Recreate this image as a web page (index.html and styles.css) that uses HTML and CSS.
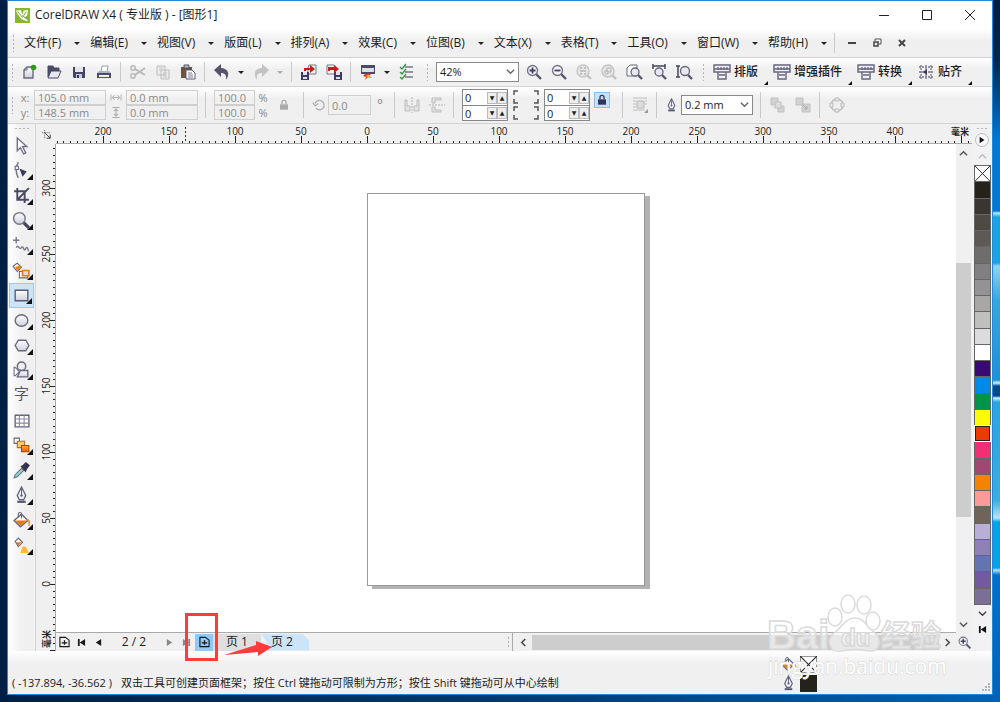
FILE: index.html
```html
<!DOCTYPE html>
<html lang="zh-CN">
<head>
<meta charset="utf-8">
<title>CorelDRAW X4</title>
<link rel="stylesheet" href="styles.css">
</head>
<body>
<svg class="sprite" aria-hidden="true">
  <defs>
    <linearGradient id="g-shade" x1="0" y1="0" x2="0" y2="1"><stop offset="0" stop-color="#fff"/><stop offset="1" stop-color="#cfcfdc"/></linearGradient>
    <linearGradient id="g-orange" x1="0" y1="0" x2="0" y2="1"><stop offset="0" stop-color="#ffb03a"/><stop offset="1" stop-color="#f25a00"/></linearGradient>
  </defs>
  <symbol id="new" viewBox="0 0 18 18"><path d="M4 7l3-3h6v11H4z" fill="url(#g-shade)" stroke="#6b6a80" stroke-width="1.4"/><path d="M4 7h3V4" fill="none" stroke="#6b6a80"/><circle cx="13.500" cy="4.500" r="2.800" fill="#2f9a1c"/></symbol>
  <symbol id="open" viewBox="0 0 18 18"><path d="M3 14V3h5l1 2h5v3" fill="#4a4a66" stroke="#4a4a66"/><path d="M3 15l3-7h10l-3 7z" fill="#e6e8f2" stroke="#4a4a66"/></symbol>
  <symbol id="save" viewBox="0 0 18 18"><path d="M3 4h12v11H4l-1-1z" fill="#44446a"/><path d="M5 4h8v5H5z" fill="#e4e4ef"/><path d="M6 11h6v4H6z" fill="#c9c9da"/><path d="M7 12h2v3H7z" fill="#33335a"/></symbol>
  <symbol id="print" viewBox="0 0 18 18"><path d="M6 9l1-6h6l-1 6" fill="#fff" stroke="#8fa6a0"/><path d="M2 10l2-2h10l2 2z" fill="#aeb0bd"/><path d="M2 10h14v5H2z" fill="#4b4b68"/><path d="M4 12h10v2H4z" fill="#f0f3dd"/></symbol>
  <symbol id="cut" viewBox="0 0 18 18"><path d="M6 6l10 6M6 12l10-7" stroke="#b9b9b9" stroke-width="1.800"/><circle cx="4" cy="5" r="2.200" fill="none" stroke="#b9b9b9" stroke-width="1.500"/><circle cx="4" cy="13" r="2.200" fill="none" stroke="#b9b9b9" stroke-width="1.500"/></symbol>
  <symbol id="copy" viewBox="0 0 18 18"><path d="M3 3h8v9H3zM7 7h8v9H7z" fill="#ededed" stroke="#bdbdbd"/><path d="M5 5h4M5 7h2M9 10h4M9 12h4M9 14h4" stroke="#c4c4c4"/></symbol>
  <symbol id="paste" viewBox="0 0 18 18"><path d="M2 4h11v11H2z" fill="#6b553e"/><path d="M5 2h5v3H5z" fill="#b8b8bd" stroke="#55556c"/><path d="M7 7h6l3 3v6H7z" fill="#fff" stroke="#5b5b74"/><path d="M9 10h4M9 12h5M9 14h5" stroke="#7a7a91"/></symbol>
  <symbol id="undo" viewBox="0 0 18 18"><path d="M1 7l7-6v4c6 0 10 5 5 12 1-6-2-7-5-7v4z" fill="#55536b"/></symbol>
  <symbol id="redo" viewBox="0 0 18 18"><path d="M17 7l-7-6v4c-6 0-10 5-5 12-1-6 2-7 5-7v4z" fill="#c3c3c3"/></symbol>
  <symbol id="disk-page" viewBox="0 0 18 18"><path d="M9 2h7v9H8V5z" fill="#f4f4f8" stroke="#77768b"/><path d="M1 9h8v8H1z" fill="#3d3d63"/><path d="M3 9h4v3H3zM3 14h4v2H3z" fill="#e0e2ee"/></symbol>
  <symbol id="import" viewBox="0 0 18 18"><use href="#disk-page"/><path d="M4 8V5h6V2l5 4-5 4V7H6v1z" fill="#d01616"/></symbol>
  <symbol id="export" viewBox="0 0 18 18"><g transform="translate(18 0) scale(-1 1)"><use href="#disk-page"/></g><path d="M3 8V4h6V2l5 4-5 4V7H5v1z" fill="#d01616"/></symbol>
  <symbol id="launch" viewBox="0 0 18 18"><path d="M2 2h14v9H2z" fill="#4b4a66"/><path d="M3 5h12v4H3z" fill="#dddde6"/><path d="M6 11h6l-2 2 3 2-4-1-3 3 1-3-3-1z" fill="#e8371c"/><circle cx="9" cy="13" r="1.500" fill="#f8ae36"/></symbol>
  <symbol id="checks" viewBox="0 0 18 18"><path d="M7 4h8M7 9h8M7 14h8" stroke="#77778a" stroke-width="1.600"/><path d="M2 4l2 2 4-5M2 9l2 2 4-5M2 14l2 2 4-5" stroke="#359245" fill="none" stroke-width="1.300"/></symbol>
  <symbol id="lens" viewBox="0 0 18 18"><path d="M11 11l5 5" stroke="#55546f" stroke-width="2.400"/><circle cx="7.500" cy="7.500" r="5" fill="#f4f5fb" stroke="#727187" stroke-width="1.300"/></symbol>
  <symbol id="zoom-in" viewBox="0 0 18 18"><use href="#lens"/><path d="M4.500 7.500h6M7.500 4.500v6" stroke="#414069" stroke-width="1.800"/></symbol>
  <symbol id="zoom-out" viewBox="0 0 18 18"><use href="#lens"/><path d="M4.500 7.500h6" stroke="#414069" stroke-width="1.800"/></symbol>
  <symbol id="lens-off" viewBox="0 0 18 18"><path d="M12 12l4 4" stroke="#c2c2c2" stroke-width="2.400"/><circle cx="8" cy="8" r="6" fill="#e6e6e6" stroke="#c5c5c5" stroke-width="1.400"/></symbol>
  <symbol id="zoom-sel" viewBox="0 0 18 18"><use href="#lens-off"/><path d="M5 5h2M9 5h2M5 8h6M5 11h2M9 11h2" stroke="#b5b5b5" stroke-width="1.500"/></symbol>
  <symbol id="zoom-obj" viewBox="0 0 18 18"><use href="#lens-off"/><path d="M7 5h4v4H7zM5 8h3v3H5z" fill="none" stroke="#b5b5b5"/></symbol>
  <symbol id="zoom-page" viewBox="0 0 18 18"><path d="M2 5l3-3h7v11H2z" fill="#fff" stroke="#65647c"/><circle cx="10" cy="9" r="4" fill="#e8e8f2" stroke="#65647c" stroke-width="1.300"/><path d="M13 12l4 4" stroke="#55546f" stroke-width="2.400"/></symbol>
  <symbol id="zoom-width" viewBox="0 0 18 18"><path d="M3 1v5M15 1v5M3 3h12" stroke="#45445f" stroke-width="1.500"/><circle cx="9" cy="9" r="4" fill="#e8e8f2" stroke="#65647c" stroke-width="1.300"/><path d="M12 12l4 4" stroke="#55546f" stroke-width="2.400"/></symbol>
  <symbol id="zoom-height" viewBox="0 0 18 18"><path d="M1 3h4M1 14h4M3 3v11" stroke="#45445f" stroke-width="1.500"/><circle cx="10" cy="8" r="4.500" fill="#e8e8f2" stroke="#65647c" stroke-width="1.300"/><path d="M13 12l4 4" stroke="#55546f" stroke-width="2.400"/></symbol>
  <symbol id="plugin" viewBox="0 0 18 18"><path d="M1 2h16v7H1zM5 9h8v7H5z" fill="#f0f0f6" stroke="#65647f" stroke-width="1.400"/><path d="M1 6h16M5 4v3M8 4v3M11 4v3M14 4v3M6 12h6" stroke="#65647f" stroke-width="1.300"/></symbol>
  <symbol id="snap" viewBox="0 0 18 18"><path d="M2 4h14M2 9h14M2 14h14M4 2v14M9 2v14M14 2v14" stroke="#77768d" stroke-width="1.300" stroke-dasharray="2 1"/><path d="M6 9l4-3v6z" fill="#393855"/></symbol>
  <symbol id="span-h" viewBox="0 0 18 18"><path d="M2 5v8M16 5v8M4 9h10M7 6L4 9l3 3M11 6l3 3-3 3" fill="none" stroke="#b4b4b4" stroke-width="1.400"/></symbol>
  <symbol id="span-v" viewBox="0 0 18 18"><path d="M4 2h10M4 16h10M9 4v10M6 7l3-3 3 3M6 11l3 3 3-3" fill="none" stroke="#aaa" stroke-width="1.400"/></symbol>
  <symbol id="lock" viewBox="0 0 18 18"><path d="M6 8V5c0-4 6-4 6 0v3" fill="none" stroke="currentColor" stroke-width="2"/><path d="M3 8h12v8H3z" fill="currentColor"/></symbol>
  <symbol id="rotate" viewBox="0 0 18 18"><path d="M5 13a6 6 0 1 0-1-6M1 6l3 4 4-3" fill="none" stroke="#b0b0b0" stroke-width="1.600"/></symbol>
  <symbol id="mirror-h" viewBox="0 0 18 18"><path d="M2 4h2v6h3v5H2zM16 4h-2v6h-3v5h5z" fill="#e3e3e3" stroke="#bdbdbd"/><path d="M9 1v16" stroke="#b0b0b0" stroke-dasharray="2 1"/></symbol>
  <symbol id="mirror-v" viewBox="0 0 18 18"><path d="M4 2h9v2H7v3H4zM4 16h9v-2H7v-3H4z" fill="#e3e3e3" stroke="#bdbdbd"/><path d="M1 9h16" stroke="#b0b0b0" stroke-dasharray="2 1"/></symbol>
  <symbol id="wrap" viewBox="0 0 18 18"><path d="M2 2h14M2 5h3M2 8h3M2 11h3M14 5h2M14 8h2M2 14h12" stroke="#bdbdbd"/><path d="M6 5h7v7H6z" fill="#dcdcdc" stroke="#b8b8b8"/><path d="M17 13v4h-4z" fill="#999"/></symbol>
  <symbol id="nib" viewBox="0 0 18 18"><path d="M9 1l4 8-2 4H7L5 9z" fill="#f4f4fa" stroke="#65647e" stroke-width="1.300"/><path d="M9 2v7" stroke="#65647e"/><circle cx="9" cy="9" r="1.200" fill="#65647e"/><path d="M5 14h8v2H5z" fill="#55546e"/></symbol>
  <symbol id="order-a" viewBox="0 0 18 18"><path d="M2 2h7v7H2zM9 10h6v6H9z" fill="#d2d2d2" stroke="#c0c0c0"/><path d="M6 6h6v6H6z" fill="#ddd" stroke="#c0c0c0"/></symbol>
  <symbol id="order-b" viewBox="0 0 18 18"><path d="M2 2h7v7H2zM8 8h8v8H8z" fill="#d2d2d2" stroke="#c0c0c0"/><path d="M9 9l4 4M13 10v3h-3" stroke="#aaa" fill="none"/></symbol>
  <symbol id="convert" viewBox="0 0 18 18"><circle cx="9" cy="9" r="6" fill="none" stroke="#bdbdbd" stroke-width="1.400"/><path d="M7 2h4v3H7zM7 13h4v3H7zM2 7h3v4H2zM13 7h3v4h-3z" fill="#e8e8e8" stroke="#bdbdbd"/></symbol>
  <symbol id="pick" viewBox="0 0 18 18"><path d="M5 2v12l3-3 3 6 2-1-3-6h4z" fill="#fff" stroke="#716f88" stroke-width="1.300"/></symbol>
  <symbol id="shape" viewBox="0 0 18 18"><path d="M6 1c-3 5-3 9 0 15" fill="none" stroke="#777689" stroke-width="1.400"/><path d="M3 5h3v3H3z" fill="#fff" stroke="#65647e"/><path d="M7 7l7 3-4 5z" fill="#3c3b59"/></symbol>
  <symbol id="crop" viewBox="0 0 18 18"><path d="M5 2v11h11M2 5h10v11M5 13L16 2" fill="none" stroke="#4a4964" stroke-width="1.800"/></symbol>
  <symbol id="zoom" viewBox="0 0 18 18"><path d="M11 11l5 5" stroke="#44435e" stroke-width="3"/><circle cx="7" cy="7" r="5.500" fill="url(#g-shade)" stroke="#727187" stroke-width="1.300"/></symbol>
  <symbol id="freehand" viewBox="0 0 18 18"><path d="M1 4h6M4 1v6M4 11c2-4 3 3 5 0s2 5 4 1 2 3 3 2" fill="none" stroke="#777689" stroke-width="1.300"/></symbol>
  <symbol id="smart" viewBox="0 0 18 18"><path d="M1 5l4-3 4 4-4 4z" fill="#f4f4f8" stroke="#65647e"/><path d="M3 6l5-2v3l-3 3z" fill="#ef850d"/><path d="M7 10h8v6H7z" fill="#fff" stroke="#65647e"/><path d="M10 9h6v5h-6z" fill="#dcdce8" stroke="#e67912" stroke-width="1.500"/></symbol>
  <symbol id="rect" viewBox="0 0 18 18"><path d="M3 4h12v10H3z" fill="url(#g-shade)" stroke="#5b5a72" stroke-width="1.300"/></symbol>
  <symbol id="ellipse" viewBox="0 0 18 18"><ellipse cx="9" cy="9" rx="6" ry="5.500" fill="url(#g-shade)" stroke="#6b6a80" stroke-width="1.300"/></symbol>
  <symbol id="polygon" viewBox="0 0 18 18"><path d="M6 4h7l3 5-3 5H6L3 9z" fill="url(#g-shade)" stroke="#6b6a80" stroke-width="1.300"/></symbol>
  <symbol id="basic" viewBox="0 0 18 18"><path d="M3 6l4 4-4 4H2V6z" fill="#fff" stroke="#6b6a80"/><circle cx="9" cy="5" r="4" fill="#eee" stroke="#6b6a80" stroke-width="1.300"/><path d="M8 9h7v6H5z" fill="url(#g-shade)" stroke="#6b6a80" stroke-width="1.300"/></symbol>
  <symbol id="table" viewBox="0 0 18 18"><path d="M3 4h13v11H3z" fill="#fff" stroke="#65647e" stroke-width="1.300"/><path d="M3 7.500h13M3 11.500h13M7 4v11M11.500 4v11" stroke="#8b8a9f"/></symbol>
  <symbol id="blend" viewBox="0 0 18 18"><path d="M2 2h5v5H2z" fill="#fff" stroke="#65647e"/><path d="M5 5h7v6H5z" fill="#ffcb70" stroke="#a97523"/><path d="M9 9h7v6H9z" fill="url(#g-orange)" stroke="#a94600"/></symbol>
  <symbol id="dropper" viewBox="0 0 18 18"><path d="M2 16l1-3 6-6 2 2-6 6z" fill="#9ed0c7" stroke="#55788a"/><path d="M8 5l2-1 3-3 4 3-3 4-1 3z" fill="#34334d"/></symbol>
  <symbol id="bucket" viewBox="0 0 18 18"><path d="M2 9l7-6 6 6-7 6z" fill="#fff" stroke="#65647e" stroke-width="1.300"/><path d="M3 9h11l-6 5z" fill="#e87805"/><path d="M6 6V3c0-2 3-2 3 0v4" fill="none" stroke="#65647e"/><path d="M14 8c2 0 3 2 2 6" fill="none" stroke="#f39124" stroke-width="1.500"/></symbol>
  <symbol id="interactive" viewBox="0 0 18 18"><path d="M3 5l3-3 4 4-4 4z" fill="#fff" stroke="#65647e"/><path d="M4 6h5l-3 3z" fill="#e87805"/><path d="M10 10h3l3 6H8z" fill="#ffb739"/></symbol>
  <symbol id="page-add" viewBox="0 0 12 12"><path d="M1 1h6l4 3v7H1z" fill="none" stroke="#171717" stroke-width="1.200"/><path d="M6 4v5M3 7h6" stroke="#171717" stroke-width="1.400"/></symbol>
  <symbol id="chev-down" viewBox="0 0 10 10"><path d="M1 3l4 4 4-4" fill="none" stroke="currentColor" stroke-width="1.600"/></symbol>
  <symbol id="chev-up" viewBox="0 0 10 10"><path d="M1 7l4-4 4 4" fill="none" stroke="currentColor" stroke-width="1.600"/></symbol>
  <symbol id="chev-left" viewBox="0 0 10 10"><path d="M7 1L3 5l4 4" fill="none" stroke="currentColor" stroke-width="1.600"/></symbol>
  <symbol id="chev-right" viewBox="0 0 10 10"><path d="M3 1l4 4-4 4" fill="none" stroke="currentColor" stroke-width="1.600"/></symbol>
  <symbol id="first" viewBox="0 0 10 10"><path d="M1 1h2v8H1zM9 1v8L3 5z" fill="currentColor"/></symbol>
  <symbol id="prev" viewBox="0 0 10 10"><path d="M8 1v8L2 5z" fill="currentColor"/></symbol>
  <symbol id="next" viewBox="0 0 10 10"><path d="M2 1v8l6-4z" fill="currentColor"/></symbol>
</svg>

<div class="window">
  <header class="titlebar">
    <svg class="logo" viewBox="0 0 16 16"><path d="M0 0h16v16H0z" fill="#87b72b"/><path d="M1 3l5-1 2 5 1-4 5-1-1 6-3 2 4 3-1 1-6-2-4-5z" fill="#fff"/><path d="M3 4l5 6 4-6M8 8l6 5" stroke="#77a52a" fill="none"/></svg>
    <h1>CorelDRAW X4 ( 专业版 ) - [图形1]</h1>
    <button class="win-btn" aria-label="最小化"><svg viewBox="0 0 12 12"><path d="M1 6.500h10" stroke="#222"/></svg></button>
    <button class="win-btn" aria-label="最大化"><svg viewBox="0 0 12 12"><path d="M1.500 1.500h9v9h-9z" stroke="#222" fill="none"/></svg></button>
    <button class="win-btn" aria-label="关闭"><svg viewBox="0 0 12 12"><path d="M1 1l10 10M11 1L1 11" stroke="#222"/></svg></button>
  </header>

  <nav class="menubar">
    <span class="grip"></span>
    <button>文件(F)</button><button>编辑(E)</button><button>视图(V)</button><button>版面(L)</button><button>排列(A)</button><button>效果(C)</button><button>位图(B)</button><button>文本(X)</button><button>表格(T)</button><button>工具(O)</button><button>窗口(W)</button><button>帮助(H)</button>
    <span class="rule"></span>
    <button class="doc-btn" aria-label="最小化文档"><svg viewBox="0 0 10 10"><path d="M1 5h8" stroke="#444" stroke-width="2"/></svg></button>
    <button class="doc-btn" aria-label="还原文档"><svg viewBox="0 0 10 10"><path d="M3 3V1h6v5H7" stroke="#555" fill="none"/><path d="M2 4h4v4H2z" stroke="#444" stroke-width="1.500" fill="none"/></svg></button>
    <button class="doc-btn" aria-label="关闭文档"><svg viewBox="0 0 10 10"><path d="M2 2l6 6M8 2L2 8" stroke="#444" stroke-width="2"/></svg></button>
  </nav>

  <div class="toolbar">
    <span class="grip"></span>
    <button class="tool" aria-label="新建"><svg><use href="#new"/></svg></button>
    <button class="tool" aria-label="打开"><svg><use href="#open"/></svg></button>
    <button class="tool" aria-label="保存"><svg><use href="#save"/></svg></button>
    <button class="tool" aria-label="打印"><svg><use href="#print"/></svg></button>
    <span class="rule"></span>
    <button class="tool" aria-label="剪切"><svg><use href="#cut"/></svg></button>
    <button class="tool" aria-label="复制"><svg><use href="#copy"/></svg></button>
    <button class="tool" aria-label="粘贴"><svg><use href="#paste"/></svg></button>
    <span class="rule"></span>
    <button class="tool" aria-label="撤消"><svg><use href="#undo"/></svg></button>
    <button class="drop" aria-label="撤消列表"></button>
    <button class="tool" aria-label="重做"><svg><use href="#redo"/></svg></button>
    <button class="drop off" aria-label="重做列表"></button>
    <span class="rule"></span>
    <button class="tool" aria-label="导入"><svg><use href="#import"/></svg></button>
    <button class="tool" aria-label="导出"><svg><use href="#export"/></svg></button>
    <span class="rule"></span>
    <button class="tool" aria-label="启动器"><svg><use href="#launch"/></svg></button>
    <button class="drop" aria-label="启动器列表"></button>
    <button class="tool" aria-label="选项"><svg><use href="#checks"/></svg></button>
    <span class="grip wide"></span>
    <span class="combo zoom-level"><select aria-label="缩放级别"><option>42%</option></select><svg><use href="#chev-down"/></svg></span>
    <button class="tool" aria-label="放大"><svg><use href="#zoom-in"/></svg></button>
    <button class="tool" aria-label="缩小"><svg><use href="#zoom-out"/></svg></button>
    <button class="tool" aria-label="缩放选定"><svg><use href="#zoom-sel"/></svg></button>
    <button class="tool" aria-label="缩放全部"><svg><use href="#zoom-obj"/></svg></button>
    <button class="tool" aria-label="缩放页面"><svg><use href="#zoom-page"/></svg></button>
    <button class="tool" aria-label="缩放页宽"><svg><use href="#zoom-width"/></svg></button>
    <button class="tool" aria-label="缩放页高"><svg><use href="#zoom-height"/></svg></button>
    <span class="grip mid"></span>
    <button class="text-tool"><svg><use href="#plugin"/></svg>排版</button>
    <button class="text-tool"><svg><use href="#plugin"/></svg>增强插件</button>
    <button class="text-tool"><svg><use href="#plugin"/></svg>转换</button>
    <button class="text-tool"><svg><use href="#snap"/></svg>贴齐</button>
  </div>

  <div class="propbar">
    <span class="grip"></span>
    <div class="pairs position">
      <label for="px">x:</label><input id="px" value="105.0 mm" disabled>
      <label for="py">y:</label><input id="py" value="148.5 mm" disabled>
    </div>
    <div class="pairs size">
      <label for="pw" aria-label="宽度"><svg><use href="#span-h"/></svg></label><input id="pw" value="0.0 mm" disabled>
      <label for="ph" aria-label="高度"><svg><use href="#span-v"/></svg></label><input id="ph" value="0.0 mm" disabled>
    </div>
    <span class="rule"></span>
    <div class="pairs scale">
      <input id="sx" value="100.0" disabled><label for="sx">%</label>
      <input id="sy" value="100.0" disabled><label for="sy">%</label>
    </div>
    <button class="tool ratio" aria-label="锁定比率"><svg><use href="#lock"/></svg></button>
    <span class="rule"></span>
    <div class="angle"><label for="rot" aria-label="旋转角度"><svg><use href="#rotate"/></svg></label><input id="rot" value="0.0" disabled><span>°</span></div>
    <span class="rule"></span>
    <button class="tool" aria-label="水平镜像"><svg><use href="#mirror-h"/></svg></button>
    <button class="tool" aria-label="垂直镜像"><svg><use href="#mirror-v"/></svg></button>
    <span class="rule"></span>
    <div class="spins">
      <div class="spin"><input aria-label="左上圆角" value="0"><button aria-label="减小">▼</button><button aria-label="增大">▲</button></div>
      <div class="spin"><input aria-label="左下圆角" value="0"><button aria-label="减小">▼</button><button aria-label="增大">▲</button></div>
    </div>
    <svg class="corners" viewBox="0 0 26 30"><path d="M5 1H1v4M1 9v4h4M21 1h4v4M25 9v4h-4M5 17H1v4M1 25v4h4M21 17h4v4M25 25v4h-4" fill="none" stroke="#555" stroke-width="1.500"/></svg>
    <div class="spins">
      <div class="spin"><input aria-label="右上圆角" value="0"><button aria-label="减小">▼</button><button aria-label="增大">▲</button></div>
      <div class="spin"><input aria-label="右下圆角" value="0"><button aria-label="减小">▼</button><button aria-label="增大">▲</button></div>
    </div>
    <button class="tool round-lock" aria-label="全部圆角"><svg><use href="#lock"/></svg></button>
    <span class="rule"></span>
    <button class="tool" aria-label="段落文本换行"><svg><use href="#wrap"/></svg></button>
    <span class="rule"></span>
    <div class="outline"><label for="ow" aria-label="轮廓宽度"><svg><use href="#nib"/></svg></label><span class="combo"><select id="ow"><option>0.2 mm</option></select><svg><use href="#chev-down"/></svg></span></div>
    <span class="rule"></span>
    <button class="tool" aria-label="到图层前面"><svg><use href="#order-a"/></svg></button>
    <button class="tool" aria-label="到图层后面"><svg><use href="#order-b"/></svg></button>
    <span class="rule"></span>
    <button class="tool" aria-label="转换为曲线"><svg><use href="#convert"/></svg></button>
  </div>

  <main class="work">
    <aside class="toolbox">
      <span class="hgrip"></span>
      <button aria-label="挑选"><svg><use href="#pick"/></svg></button>
      <button class="fly" aria-label="形状"><svg><use href="#shape"/></svg></button>
      <button class="fly" aria-label="裁剪"><svg><use href="#crop"/></svg></button>
      <button class="fly" aria-label="缩放"><svg><use href="#zoom"/></svg></button>
      <button class="fly" aria-label="手绘"><svg><use href="#freehand"/></svg></button>
      <button class="fly" aria-label="智能填充"><svg><use href="#smart"/></svg></button>
      <button class="fly active" aria-label="矩形"><svg><use href="#rect"/></svg></button>
      <button class="fly" aria-label="椭圆形"><svg><use href="#ellipse"/></svg></button>
      <button class="fly" aria-label="多边形"><svg><use href="#polygon"/></svg></button>
      <button class="fly" aria-label="基本形状"><svg><use href="#basic"/></svg></button>
      <button class="glyph" aria-label="文本">字</button>
      <button aria-label="表格"><svg><use href="#table"/></svg></button>
      <button class="fly" aria-label="调和"><svg><use href="#blend"/></svg></button>
      <button class="fly" aria-label="滴管"><svg><use href="#dropper"/></svg></button>
      <button class="fly" aria-label="轮廓"><svg><use href="#nib"/></svg></button>
      <button class="fly" aria-label="填充"><svg><use href="#bucket"/></svg></button>
      <button class="fly" aria-label="交互式填充"><svg><use href="#interactive"/></svg></button>
    </aside>

    <section class="document">
      <div class="origin"><svg viewBox="0 0 12 12"><path d="M1 4h10M4 1v10" stroke="#555" stroke-dasharray="1 1"/><path d="M4 4l6 6M10 6v4H6" fill="none" stroke="#333"/></svg></div>
      <svg class="ruler-h">
        <defs><pattern id="tick-h" x="47" width="66" height="20" patternUnits="userSpaceOnUse"><path d="M0 12h1v7h-1zM7 17h1v2h-1zM13 17h1v2h-1zM20 17h1v2h-1zM26 17h1v2h-1zM33 17h1v2h-1zM40 17h1v2h-1zM46 17h1v2h-1zM53 17h1v2h-1zM59 17h1v2h-1z" fill="#222"/></pattern></defs>
        <rect width="100%" height="20" fill="url(#tick-h)"/>
        <path d="M129.500 3v14" stroke="#333" stroke-dasharray="2 2"/>
        <g class="marks"><text x="47" y="11">200</text><text x="113" y="11">150</text><text x="179" y="11">100</text><text x="245" y="11">50</text><text x="311" y="11">0</text><text x="377" y="11">50</text><text x="443" y="11">100</text><text x="509" y="11">150</text><text x="575" y="11">200</text><text x="641" y="11">250</text><text x="707" y="11">300</text><text x="773" y="11">350</text><text x="839" y="11">400</text><text class="unit" x="904" y="11">毫米</text></g>
      </svg>
      <svg class="ruler-v">
        <defs><pattern id="tick-v" y="44" width="20" height="66" patternUnits="userSpaceOnUse"><path d="M14 0v1h5v-1zM17 7v1h2v-1zM17 13v1h2v-1zM17 20v1h2v-1zM17 26v1h2v-1zM17 33v1h2v-1zM17 40v1h2v-1zM17 46v1h2v-1zM17 53v1h2v-1zM17 59v1h2v-1z" fill="#222"/></pattern></defs>
        <rect width="20" height="100%" fill="url(#tick-v)"/>
        <g class="marks"><text transform="translate(14 44) rotate(-90)">300</text><text transform="translate(14 110) rotate(-90)">250</text><text transform="translate(14 176) rotate(-90)">200</text><text transform="translate(14 242) rotate(-90)">150</text><text transform="translate(14 308) rotate(-90)">100</text><text transform="translate(14 374) rotate(-90)">50</text><text transform="translate(14 440) rotate(-90)">0</text><text class="unit" transform="translate(14 495) rotate(-90)">毫米</text></g>
      </svg>
      <div class="canvas"><div class="page"></div></div>
      <div class="vscroll">
        <button aria-label="向上滚动"><svg><use href="#chev-up"/></svg></button>
        <div class="track"><div class="thumb"></div></div>
        <button aria-label="向下滚动"><svg><use href="#chev-down"/></svg></button>
      </div>
      <div class="pagenav">
        <button class="add" aria-label="在前面添加页"><svg><use href="#page-add"/></svg></button>
        <button aria-label="首页"><svg><use href="#first"/></svg></button>
        <button aria-label="上一页"><svg><use href="#prev"/></svg></button>
        <span class="count">2 / 2</span>
        <button class="off" aria-label="下一页"><svg><use href="#next"/></svg></button>
        <button class="off last" aria-label="末页"><svg><use href="#first"/></svg></button>
        <button class="add hot" aria-label="在后面添加页"><svg><use href="#page-add"/></svg></button>
        <button class="tab">页 1</button>
        <button class="tab current">页 2</button>
        <span class="grip end"></span>
        <span class="callout"></span>
        <svg class="arrow" viewBox="0 0 50 18"><path d="M0 15L32 5V1l16 6-14 9v-4z" fill="#ff3b3b"/></svg>
      </div>
      <div class="hscroll">
        <button aria-label="向左滚动"><svg><use href="#chev-left"/></svg></button>
        <div class="thumb"></div>
        <button aria-label="向右滚动"><svg><use href="#chev-right"/></svg></button>
      </div>
      <button class="navigator" aria-label="导航器"><svg><use href="#zoom-in"/></svg></button>
    </section>

    <aside class="palette">
      <span class="hgrip"></span>
      <button class="round" aria-label="调色板菜单"><svg><use href="#next"/></svg></button>
      <button class="step faded" aria-label="向上"><svg><use href="#chev-up"/></svg></button>
      <div class="swatches">
        <button class="none" aria-label="无填充"><svg viewBox="0 0 16 16" preserveAspectRatio="none"><path d="M0 0l16 16M16 0L0 16" stroke="#222"/></svg></button>
        <button class="c1" aria-label="黑"></button><button class="c2" aria-label="90% 黑"></button><button class="c3" aria-label="80% 黑"></button><button class="c4" aria-label="70% 黑"></button><button class="c5" aria-label="60% 黑"></button><button class="c6" aria-label="50% 黑"></button><button class="c7" aria-label="40% 黑"></button><button class="c8" aria-label="30% 黑"></button><button class="c9" aria-label="20% 黑"></button><button class="c10" aria-label="10% 黑"></button><button class="c11" aria-label="白"></button><button class="c12" aria-label="蓝"></button><button class="c13" aria-label="青"></button><button class="c14" aria-label="绿"></button><button class="c15" aria-label="黄"></button><button class="c16 chosen" aria-label="红"></button><button class="c17" aria-label="洋红"></button><button class="c18" aria-label="紫"></button><button class="c19" aria-label="橙"></button><button class="c20" aria-label="粉"></button><button class="c21" aria-label="深褐"></button><button class="c22" aria-label="浅紫"></button><button class="c23" aria-label="淡紫"></button><button class="c24" aria-label="蓝紫"></button><button class="c25" aria-label="深紫"></button><button class="c26" aria-label="灰紫"></button>
      </div>
      <button class="step" aria-label="向下"><svg><use href="#chev-down"/></svg></button>
      <button class="step start" aria-label="展开"><svg><use href="#first"/></svg></button>
    </aside>
  </main>

  <footer class="status">
    <span class="coords">( -137.894, -36.562 )</span>
    <span class="hint">双击工具可创建页面框架；按住 Ctrl 键拖动可限制为方形；按住 Shift 键拖动可从中心绘制</span>
    <div class="fills">
      <svg><use href="#bucket"/></svg><svg class="chip" viewBox="0 0 16 16"><path d="M0 0h16v16H0z" fill="#fff" stroke="#333"/><path d="M0 0l16 16M16 0L0 16" stroke="#222"/></svg>
      <svg><use href="#nib"/></svg><span class="chip ink"></span>
    </div>
    <svg class="sizer" viewBox="0 0 9 9"><path d="M7 1h2M4 4h2M7 4h2M1 7h2M4 7h2M7 7h2" stroke="#b5b5b5" stroke-width="2"/></svg>
  </footer>

  <svg class="watermark" viewBox="0 0 184 92">
    <g fill="#fff" fill-opacity=".55" stroke="#dadada" stroke-width="1.500">
      <ellipse cx="68" cy="24" rx="7" ry="9"/><ellipse cx="81" cy="11" rx="7" ry="9"/><ellipse cx="97" cy="12" rx="7" ry="9"/><ellipse cx="106" cy="28" rx="7" ry="9"/>
      <path d="M88 25c10 0 12 10 20 15 8 7 4 19-6 18-9-2-19-2-28 0-12 2-15-11-7-18 8-5 11-15 21-15z"/>
      <text class="mark-bai" x="0" y="56">Bai</text><text class="mark-du" x="74" y="53">du</text><text class="mark-cjk" x="114" y="53">经验</text>
    </g>
    <text class="mark-url" x="1" y="81">jingyan.baidu.com</text>
  </svg>
</div>
</body>
</html>
```

FILE: styles.css
```css
* { box-sizing: border-box; }
body {
  margin: 0;
  min-height: 100vh;
  padding: 0 7px 7px;
  display: flex;
  overflow: hidden;
  font: 12px/16px "Open Sans", "Noto Sans CJK SC", sans-serif;
  color: #1c1c1c;
  background:
    linear-gradient(#001c40 0, #00264f 60px, #0078d7 140px, #0078d7 211px, #bfe8f8 213px, #14a5e2 217px, #14a5e2 263px, #8fd4f0 266px, #3aa6dc 300px, #1b93d6 380px, #d8f0fa 383px, #004a8c 386px, #004a8c 396px, #d8f0fa 398px, #28a5e0 402px, #3badde 500px, #b8e2f4 518px, #00a3e6 522px, #00a3e6 568px, #b8e2f4 570px, #0070d0 575px, #0063b8 100%) right / 7px 100% no-repeat,
    linear-gradient(90deg, #001f45, #003a70 50%, #0062b5);
}
button, input, select { font: inherit; color: inherit; margin: 0; padding: 0; border: 0; border-radius: 0; background: none; }
button { display: flex; align-items: center; justify-content: center; flex: none; }
svg { display: block; flex: none; }
.sprite { position: absolute; width: 0; height: 0; }
.window {
  position: relative;
  flex: 1;
  display: flex;
  flex-direction: column;
  border: 1px solid #2488d8;
  background: #f0f0f0;
}

.titlebar { display: flex; align-items: center; height: 28px; padding: 0 1px 0 7px; background: #fff; }
.logo { width: 15px; height: 15px; }
.titlebar h1 { flex: 1; margin: 0 0 0 5px; font-size: 12px; font-weight: 400; }
.win-btn { width: 43px; height: 28px; }
.win-btn svg { width: 12px; height: 12px; }

.grip { flex: none; width: 8px; height: 18px; background: radial-gradient(circle, #b4b4b4 1px, transparent 1px) 3px 0 / 3px 4px repeat-y; }
.grip.wide { width: 17px; background-position: 7px 0; }
.grip.mid { width: 13px; background-position: 6px 0; }
.hgrip { flex: none; width: 15px; height: 9px; background: radial-gradient(circle, #b4b4b4 1px, transparent 1px) 0 3px / 4px 3px repeat-x; }
.rule { flex: none; width: 9px; height: 20px; background: linear-gradient(#c9c9c9, #c9c9c9) center / 1px 100% no-repeat; }

.menubar, .toolbar, .propbar { display: flex; align-items: center; border-bottom: 1px solid #d2d2d2; background: linear-gradient(#fff, #efefef 12px, #f0f0f0); }
.menubar { height: 29px; padding-left: 1px; }
.menubar > button:not(.doc-btn) { padding: 0 3px 0 7px; gap: 13px; height: 24px; }
.menubar > button:not(.doc-btn)::after, .drop::after { content: ""; border: 3px solid transparent; border-top-color: #222; border-bottom: 0; }
.doc-btn { width: 25px; height: 20px; }
.doc-btn svg { width: 10px; height: 10px; }
.toolbar { height: 29px; }
.tool { width: 25px; height: 24px; }
.tool svg { width: 18px; height: 18px; }
.drop { width: 14px; height: 24px; }
.drop.off::after { border-top-color: #aaa; }
.combo { position: relative; display: block; height: 20px; }
.combo select { appearance: none; width: 100%; height: 100%; padding: 0 3px; border: 1px solid #8a8a8a; background: #fff; font-size: 11px; }
.combo svg { position: absolute; right: 4px; top: 5px; width: 9px; height: 9px; color: #666; pointer-events: none; }
.zoom-level { width: 83px; margin-right: 2px; }
.text-tool { position: relative; gap: 3px; height: 24px; padding: 0 11px 0 4px; font-weight: 500; }
.text-tool svg { width: 18px; height: 18px; }
.text-tool::after { content: ""; position: absolute; right: 1px; bottom: -1px; border: 2px solid #111; border-top-color: transparent; border-left-color: transparent; }

.propbar { height: 37px; font-size: 11px; line-height: 14px; color: #8a8a8a; }
.propbar > .rule { height: 26px; }
.propbar input { width: 100%; height: 100%; border: 1px solid #cfcfcf; padding: 0 3px; }
.pairs { display: grid; grid-template-rows: 15px 15px; }
.pairs label { display: flex; align-items: center; justify-content: center; }
.pairs svg { width: 14px; height: 13px; }
.position { grid-template-columns: 18px 72px; }
.size { grid-template-columns: 20px 72px; margin-right: 3px; }
.scale { grid-template-columns: 41px 16px; margin-left: 4px; }
.ratio { color: #aaa; margin-right: 3px; }
.ratio svg, .round-lock svg { width: 12px; height: 12px; }
.angle { display: flex; align-items: center; margin: 0 7px 0 4px; gap: 2px; }
.angle input { width: 43px; height: 20px; }
.angle span { padding-left: 4px; font-size: 14px; }
.angle svg { width: 14px; height: 14px; }
.spins { width: 46px; display: grid; grid-template-rows: 15px 15px; border: 1px solid #888; margin-left: 4px; }
.spin { display: flex; align-items: center; background: #fff; color: #222; }
.spin + .spin { border-top: 1px solid #888; }
.spin input { width: 24px; border: 0; padding: 0 2px; }
.spin button { width: 10px; height: 12px; border: 1px solid #bbb; background: #eee; font: 6px/8px "DejaVu Sans", sans-serif; }
.corners { width: 26px; height: 30px; margin: 0 1px 0 5px; }
.round-lock { width: 16px; height: 16px; margin: -10px 8px 0 4px; border: 1px solid #90c0ea; background: #c5e1f8; color: #33335c; }
.outline { display: flex; align-items: center; gap: 2px; margin: 0 3px; color: #222; }
.outline > label svg { width: 15px; height: 15px; }
.outline .combo { width: 72px; }

.work { flex: 1; display: flex; min-height: 0; }
.toolbox { flex: none; width: 28px; display: flex; flex-direction: column; align-items: center; border-right: 1px solid #d6d6d6; background: linear-gradient(90deg, #fff, #f0f0f0 14px); }
.toolbox button { position: relative; width: 25px; height: 25px; }
.toolbox svg { width: 19px; height: 19px; }
.toolbox .glyph { font-size: 15px; line-height: 17px; color: #55546c; padding-bottom: 5px; }
.toolbox .active { border: 1px solid #99cbf0; background: #cce4f7; }
.fly::after { content: ""; position: absolute; right: 1px; bottom: 3px; border: 3px solid #111; border-top-color: transparent; border-left-color: transparent; }
.document { flex: 1; display: grid; grid-template: 20px minmax(0, 1fr) 18px / 20px 457px minmax(0, 1fr) 16px; }
.origin { display: grid; place-items: center; }
.origin svg { width: 11px; height: 11px; }
.ruler-h { grid-column: 2 / 5; width: 100%; height: 20px; border-bottom: 1px solid #aaa; }
.ruler-v { grid-row: 2 / 4; width: 20px; height: 100%; border-right: 1px solid #aaa; }
.marks { font-size: 10px; fill: #222; text-anchor: middle; }
.unit { font-size: 9px; font-weight: 700; }
.canvas { grid-column: 2 / 4; position: relative; overflow: hidden; background: #fff; border-bottom: 1px solid #aaa; }
.page { position: absolute; left: 311px; top: 49px; width: 278px; height: 393px; border: 1px solid #999; background: #fff; box-shadow: 5px 3px 0 0 #b2b2b2; }
.vscroll { display: flex; flex-direction: column; background: #f0f0f0; }
.vscroll button { width: 15px; height: 18px; color: #555; }
.vscroll svg, .hscroll svg, .step svg { width: 9px; height: 9px; }
.track { flex: 1; }
.vscroll .thumb { width: 15px; height: 56%; margin-top: 101px; background: #cdcdcd; }
.pagenav { position: relative; grid-column: 2; grid-row: 3; display: flex; align-items: center; border-right: 1px solid #aaa; }
.pagenav button { width: 17px; height: 17px; }
.pagenav svg { width: 9px; height: 9px; }
.pagenav .add svg { width: 11px; height: 12px; }
.pagenav .off { color: #888; }
.pagenav .last svg { transform: rotate(180deg); }
.pagenav .hot { width: 18px; background: #90c8f6; }
.count { width: 54px; text-align: center; font-size: 12px; }
.pagenav .tab { width: 48px; font-size: 12px; background: #dfdfdf; }
.pagenav .current { width: 48px; padding-right: 6px; background: #cce4f7; clip-path: polygon(0 0, 86% 0, 100% 40%, 100% 100%, 12% 100%, 12% 50%); }
.grip.end { margin-left: auto; height: 12px; }
.callout { position: absolute; left: 129px; top: -20px; width: 33px; height: 48px; border: 3px solid #ff3b3b; }
.pagenav .arrow { position: absolute; left: 168px; top: 7px; width: 50px; height: 18px; }
.hscroll { display: flex; align-items: center; background: #f0f0f0; padding-left: 2px; }
.hscroll button { width: 17px; height: 17px; color: #444; }
.hscroll .thumb { flex: 1; height: 15px; background: #cdcdcd; }
.navigator svg { width: 15px; height: 15px; }

.palette { flex: none; width: 20px; display: flex; flex-direction: column; align-items: center; background: #f2f2f2; }
.palette .hgrip { width: 12px; }
.round { width: 14px; height: 14px; border: 1px solid #bbb; border-radius: 50%; background: #f7f7f7; color: #111; }
.round svg { width: 8px; height: 8px; }
.step { width: 18px; height: 16px; color: #444; }
.step.faded { color: #bbb; height: 18px; }
.step.start { color: #111; margin-bottom: 14px; }
.swatches { flex: 1; min-height: 0; width: 17px; display: grid; grid-auto-rows: minmax(0, 1fr); border: 1px solid #666; background: #666; gap: 1px; }
.swatches .none { background: #fff; }
.swatches svg { width: 100%; height: 100%; }
.swatches .chosen { border: 1px solid #222; outline: 1px solid #fff; }
.c1 { background: #25211b; } .c2 { background: #393631; } .c3 { background: #4d4945; } .c4 { background: #5d5957; }
.c5 { background: #6e6d6b; } .c6 { background: #808080; } .c7 { background: #939393; } .c8 { background: #a8a7a6; }
.c9 { background: #bfbfbe; } .c10 { background: #dbdcdb; } .c11 { background: #fff; } .c12 { background: #370b73; }
.c13 { background: #0089e5; } .c14 { background: #00934a; } .c15 { background: #fffc00; } .c16 { background: #ea3b00; }
.c17 { background: #f22e74; } .c18 { background: #a24674; } .c19 { background: #f58200; } .c20 { background: #fb9a98; }
.c21 { background: #70635a; } .c22 { background: #b9afd6; } .c23 { background: #8f80b7; } .c24 { background: #6274b2; }
.c25 { background: #7259a0; } .c26 { background: #7b6f95; }

.status { display: flex; align-items: flex-end; height: 43px; padding: 0 2px 2px 4px; background: linear-gradient(#fff, #f0f0f0 12px); font-size: 11px; }
.coords { width: 109px; padding-bottom: 1px; white-space: nowrap; }
.hint { flex: 1; padding-bottom: 1px; white-space: nowrap; }
.fills { display: grid; grid-template-columns: 18px 17px; gap: 2px; align-items: center; margin-right: 164px; }
.fills svg { width: 17px; height: 17px; }
.fills .chip { width: 17px; height: 17px; }
.chip.ink { background: #25211b; }
.sizer { width: 9px; height: 9px; }
.watermark { position: absolute; right: 41px; bottom: 9px; width: 184px; height: 92px; pointer-events: none; }
.mark-bai { font: 700 40px "Liberation Sans", sans-serif; }
.mark-du { font: 700 24px "Liberation Sans", sans-serif; }
.mark-cjk { font: 700 30px "Noto Sans CJK SC", sans-serif; }
.mark-url { font: 21px "Open Sans", sans-serif; fill: #fff; stroke: #d5d5d5; stroke-width: 1px; paint-order: stroke; }
```
